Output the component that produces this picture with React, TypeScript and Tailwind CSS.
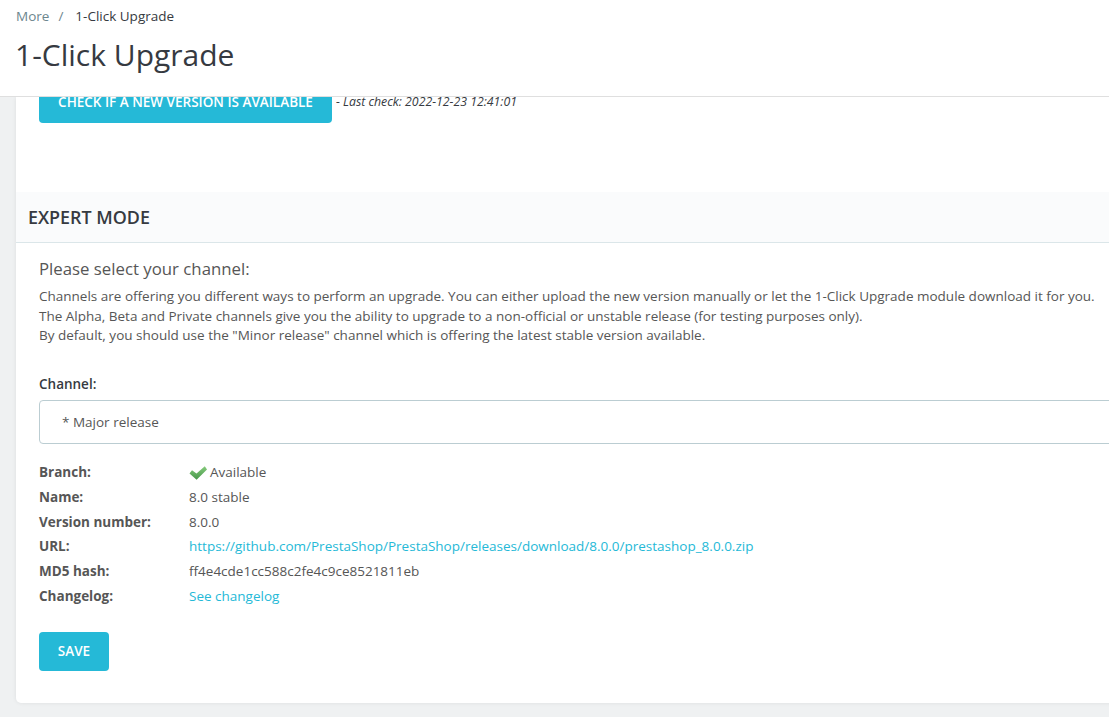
const rows = [
  { label: "Name:", value: "8.0 stable" },
  { label: "Version number:", value: "8.0.0" },
];

const Row = ({ label, children }: { label: string; children: React.ReactNode }) => (
  <div className="flex h-[24.7px] items-center text-[13.5px]">
    <span className="w-[150px] shrink-0 font-bold text-[#565656]">{label}</span>
    <span className="text-[#565656]">{children}</span>
  </div>
);

export default function App() {
  return (
    <div
      className="flex h-[717px] w-[1109px] flex-col overflow-hidden bg-[#eff1f2]"
      style={{ fontFamily: '"Open Sans", sans-serif' }}
    >
      <header className="relative z-10 h-[97px] shrink-0 border-b border-[#dfdfdf] bg-white px-4 pt-[7px]">
        <div className="flex h-[19px] items-center text-[13.5px] leading-[19px]">
          <span className="text-[#6c868e]">More</span>
          <span className="ml-[9px] mr-[12px] text-[#6c868e]">/</span>
          <span className="text-[#363a41]">1-Click Upgrade</span>
        </div>
        <h1 className="mt-[8px] -ml-px text-[30px] leading-[41px] text-[#363a41]">1-Click Upgrade</h1>
      </header>

      <main className="w-[1300px] pl-4">
        <div className="rounded-b-[5px] bg-white pb-[32px] shadow-[0_0_4px_0_rgba(0,0,0,0.08)]">
          <div className="flex h-[95px] items-start pl-[23px]">
            <button className="-mt-[16px] h-[42px] w-[293px] rounded-[4px] bg-[#25b9d7] text-[13.5px] font-semibold uppercase text-white">
              Check if a new version is available
            </button>
            <em className="ml-[4px] -mt-[4px] text-[12.3px] text-[#363a41]">- Last check: 2022-12-23 12:41:01</em>
          </div>

          <div className="flex h-[51px] items-center border-b border-[#dbe6e9] bg-[#fafbfc] pl-3">
            <h2 className="text-[17.9px] font-semibold uppercase text-[#363a41]">Expert mode</h2>
          </div>

          <div className="pl-[23px]">
            <h3 className="mt-[14px] text-[16.8px] leading-[24px] text-[#565656]">Please select your channel:</h3>
            <p className="mt-[6px] whitespace-nowrap text-[13.5px] leading-[19.5px] text-[#565656]">
              Channels are offering you different ways to perform an upgrade. You can either upload the new version manually or let the 1-Click Upgrade module download it for you.
              <br />
              The Alpha, Beta and Private channels give you the ability to upgrade to a non-official or unstable release (for testing purposes only).
              <br />
              By default, you should use the "Minor release" channel which is offering the latest stable version available.
            </p>

            <label className="mt-[29px] block text-[13.5px] font-semibold leading-[19px] text-[#363a41]">Channel:</label>
            <div className="mt-[6px] flex h-[44px] items-center rounded-[4px] border border-[#bbcdd2] pl-[22px] pt-[1px] text-[13.5px] text-[#565656]">
              * Major release
            </div>

            <div className="mt-[16.7px]">
              <Row label="Branch:">
                <span className="flex items-center gap-[3px]">
                  <svg width="18" height="16" viewBox="0 0 18 16">
                    <defs>
                      <linearGradient id="check" x1="0" y1="0" x2="0" y2="1">
                        <stop offset="0" stopColor="#86cb7c" />
                        <stop offset="1" stopColor="#47974a" />
                      </linearGradient>
                    </defs>
                    <path d="M0.5 8.5 L3 5.2 L7.5 8.6 L15.8 1.2 L18 4.5 L7.6 14.8 Z" fill="url(#check)" />
                  </svg>
                  Available
                </span>
              </Row>
              {rows.map((r) => (
                <Row key={r.label} label={r.label}>{r.value}</Row>
              ))}
              <Row label="URL:">
                <a className="text-[#25b9d7]">https://github.com/PrestaShop/PrestaShop/releases/download/8.0.0/prestashop_8.0.0.zip</a>
              </Row>
              <Row label="MD5 hash:">ff4e4cde1cc588c2fe4c9ce8521811eb</Row>
              <Row label="Changelog:">
                <a className="text-[#25b9d7]">See changelog</a>
              </Row>
            </div>

            <button className="mt-[23.3px] h-[39px] w-[70px] rounded-[4px] bg-[#25b9d7] text-[13.5px] font-semibold uppercase text-white">
              Save
            </button>
          </div>
        </div>
      </main>
    </div>
  );
}
